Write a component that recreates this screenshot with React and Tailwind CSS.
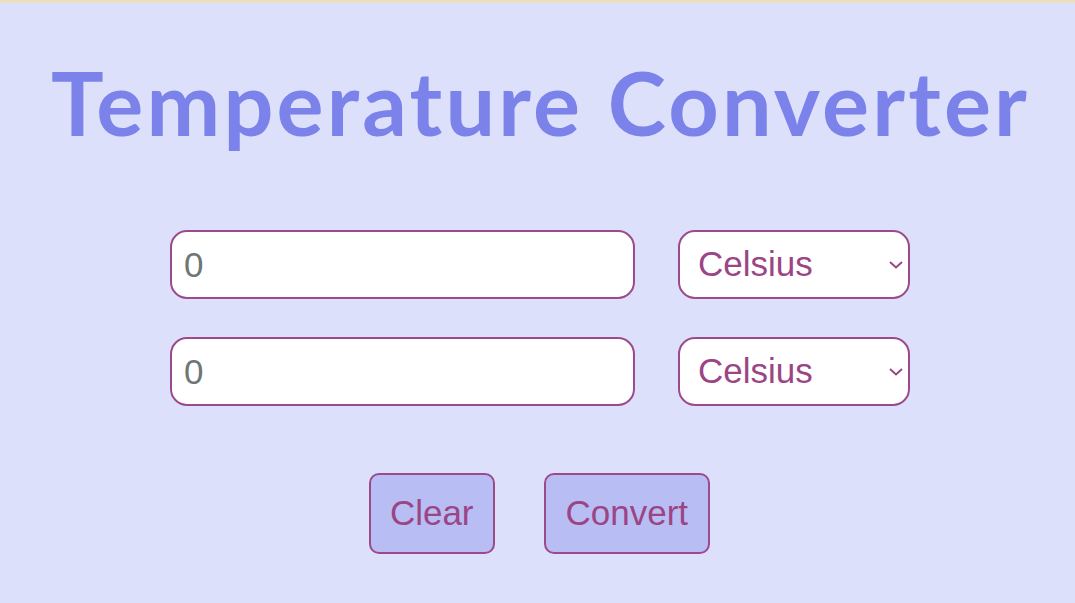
const Chevron = () => (
  <svg
    className="absolute right-[7px] top-1/2 -translate-y-1/2 pointer-events-none"
    width="14"
    height="8"
    viewBox="0 0 14 8"
    fill="none"
  >
    <path d="M1 1l6 5.5L13 1" stroke="#9b4585" strokeWidth="2" />
  </svg>
)

const UnitSelect = () => (
  <div className="relative">
    <select className="appearance-none w-[232px] h-[69px] bg-white border-2 border-[#9d4a8c] rounded-[17px] pl-[18px] pr-[24px] text-[35px] text-[#9b4585] outline-none">
      <option>Celsius</option>
      <option>Fahrenheit</option>
      <option>Kelvin</option>
    </select>
    <Chevron />
  </div>
)

const App = () => {
  return (
    <div className="min-h-[603px] bg-[#dde0fb] border-t-[3px] border-[#ecdfc0] flex flex-col items-center">
      {/* Heading */}
      <h1
        className="mt-[44px] pl-[6px] text-[88px] leading-[110px] font-bold text-[#7b83eb] tracking-[3.2px]"
        style={{ fontFamily: "Lato, 'Open Sans', sans-serif" }}
      >
        Temperature Converter
      </h1>

      {/* Rows */}
      <div
        className="mt-[73px] pl-[5px] flex flex-col gap-[38px]"
        style={{ fontFamily: "'Liberation Sans', Arial, sans-serif" }}
      >
        <div className="flex gap-[43px]">
          <input
            type="text"
            defaultValue="0"
            className="w-[465px] h-[69px] bg-white border-2 border-[#9d4a8c] rounded-[17px] px-[12px] text-[35px] text-[#6e7676] outline-none"
          />
          <UnitSelect />
        </div>
        <div className="flex gap-[43px]">
          <input
            type="text"
            defaultValue="0"
            className="w-[465px] h-[69px] bg-white border-2 border-[#9d4a8c] rounded-[17px] px-[12px] text-[35px] text-[#6e7676] outline-none"
          />
          <UnitSelect />
        </div>
      </div>

      {/* Buttons */}
      <div
        className="mt-[67px] pl-[4px] flex gap-[49px]"
        style={{ fontFamily: "'Liberation Sans', Arial, sans-serif" }}
      >
        <button className="h-[81px] px-[19px] bg-[#b8bdf4] border-2 border-[#9d4a8c] rounded-[10px] text-[35px] text-[#9b4585]">
          Clear
        </button>
        <button className="h-[81px] px-[20px] bg-[#b8bdf4] border-2 border-[#9d4a8c] rounded-[10px] text-[35px] text-[#9b4585]">
          Convert
        </button>
      </div>
    </div>
  )
}

export default App
